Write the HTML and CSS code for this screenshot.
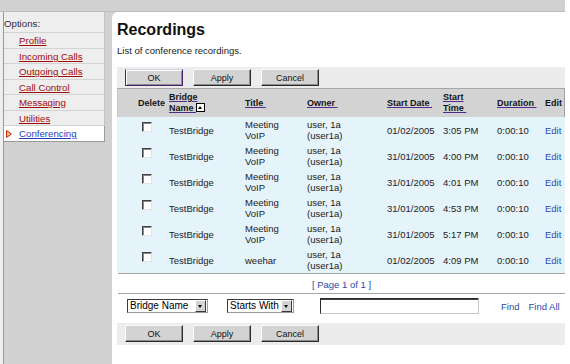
FILE: index.html
```html
<!DOCTYPE html>
<html lang="en">
<head>
  <meta charset="UTF-8">
  <title>Recordings</title>
  <link rel="stylesheet" href="styles.css">
</head>
<body>
  <div class="page">
    <div class="topbar"></div>
    <div class="frame">
      <div class="sidebar">
        <ul class="options">
          <li class="options-title">Options:</li>
          <li><a href="#">Profile</a></li>
          <li><a href="#">Incoming Calls</a></li>
          <li><a href="#">Outgoing Calls</a></li>
          <li><a href="#">Call Control</a></li>
          <li><a href="#">Messaging</a></li>
          <li><a href="#">Utilities</a></li>
          <li class="current">
            <svg class="arrow" width="6" height="8" viewBox="0 0 6 8"><path d="M0.5 0.5 L5.5 4 L0.5 7.5 Z" fill="#f6c27a" stroke="#c8280a" stroke-width="1"/></svg><a href="#">Conferencing</a>
          </li>
        </ul>
      </div>

      <div class="main">
        <h1>Recordings</h1>
        <p class="intro">List of conference recordings.</p>

        <div class="toolbar">
          <button class="btn btn-default">OK</button>
          <button class="btn">Apply</button>
          <button class="btn">Cancel</button>
        </div>

        <table class="list">
          <colgroup>
            <col style="width:49px"><col style="width:76px"><col style="width:62px"><col style="width:80px">
            <col style="width:56px"><col style="width:54px"><col style="width:48px"><col style="width:23px">
          </colgroup>
          <thead>
            <tr>
              <th class="col-del">Delete</th>
              <th><a href="#">Bridge</a><br><a href="#">Name&nbsp;</a><span class="sort"></span></th>
              <th><a href="#">Title&nbsp;</a></th>
              <th><a href="#">Owner&nbsp;</a></th>
              <th><a href="#">Start Date&nbsp;</a></th>
              <th><a href="#">Start</a><br><a href="#">Time&nbsp;</a></th>
              <th><a href="#">Duration&nbsp;</a></th>
              <th>Edit</th>
            </tr>
          </thead>
          <tbody>
            <tr>
              <td class="col-del"><span class="cb"></span></td>
              <td>TestBridge</td><td>Meeting<br>VoIP</td><td>user, 1a<br>(user1a)</td>
              <td>01/02/2005</td><td>3:05 PM</td><td>0:00:10</td><td><a class="edit" href="#">Edit</a></td>
            </tr>
            <tr>
              <td class="col-del"><span class="cb"></span></td>
              <td>TestBridge</td><td>Meeting<br>VoIP</td><td>user, 1a<br>(user1a)</td>
              <td>31/01/2005</td><td>4:00 PM</td><td>0:00:10</td><td><a class="edit" href="#">Edit</a></td>
            </tr>
            <tr>
              <td class="col-del"><span class="cb"></span></td>
              <td>TestBridge</td><td>Meeting<br>VoIP</td><td>user, 1a<br>(user1a)</td>
              <td>31/01/2005</td><td>4:01 PM</td><td>0:00:10</td><td><a class="edit" href="#">Edit</a></td>
            </tr>
            <tr>
              <td class="col-del"><span class="cb"></span></td>
              <td>TestBridge</td><td>Meeting<br>VoIP</td><td>user, 1a<br>(user1a)</td>
              <td>31/01/2005</td><td>4:53 PM</td><td>0:00:10</td><td><a class="edit" href="#">Edit</a></td>
            </tr>
            <tr>
              <td class="col-del"><span class="cb"></span></td>
              <td>TestBridge</td><td>Meeting<br>VoIP</td><td>user, 1a<br>(user1a)</td>
              <td>31/01/2005</td><td>5:17 PM</td><td>0:00:10</td><td><a class="edit" href="#">Edit</a></td>
            </tr>
            <tr>
              <td class="col-del"><span class="cb"></span></td>
              <td>TestBridge</td><td>weehar</td><td>user, 1a<br>(user1a)</td>
              <td>01/02/2005</td><td>4:09 PM</td><td>0:00:10</td><td><a class="edit" href="#">Edit</a></td>
            </tr>
          </tbody>
        </table>

        <div class="pager"><a href="#">[ Page 1 of 1 ]</a></div>

        <div class="filter">
          <div class="select sel-field"><span class="select-text">Bridge Name</span><span class="select-btn"></span></div>
          <div class="select sel-match"><span class="select-text">Starts With</span><span class="select-btn"></span></div>
          <input type="text" class="search">
          <a class="find" href="#">Find</a>
          <a class="find" href="#">Find All</a>
        </div>

        <div class="toolbar toolbar-bottom">
          <button class="btn">OK</button>
          <button class="btn">Apply</button>
          <button class="btn">Cancel</button>
        </div>
      </div>
    </div>
  </div>
</body>
</html>
```

FILE: styles.css
```css
body {
  margin: 0;
  background: #fff;
  font-family: "Liberation Sans", Arial, sans-serif;
  font-size: 9.5px;
  color: #222;
}

.page {
  width: 565px;
}

.topbar {
  height: 11px;
  background: #d1d1d1;
  border-bottom: 1px solid #bcbcbc;
}

.frame {
  display: flex;
  min-height: 352px;
  background: #d1d1d1;
}

/* left menu */
.sidebar {
  width: 108px;
  border-left: 3px solid #efefef;
  padding-left: 1px;
  box-shadow: inset 1px 0 0 #9a9a9a;
  background: #d1d1d1;
}

.options {
  list-style: none;
  margin: 0;
  padding: 0;
  width: 101px;
  background: #eeeeee;
  border-bottom: 1px solid #9a9a9a;
  font-size: 9.7px;
}

.options li {
  height: 14.5px;
  line-height: 16px;
  padding-left: 15px;
  border-bottom: 1px solid #d2d2d2;
  border-right: 1px solid #c2c2c2;
}

.options li.options-title {
  height: 20px;
  line-height: 24px;
  padding-left: 0;
  color: #2e2a38;
}

.options a {
  color: #9e0b0b;
}

.options li.current {
  background: #fff;
  padding-left: 2px;
  border-bottom: none;
  border-right-color: #9a9a9a;
}

.options li.current a {
  color: #1e3fc4;
}

.arrow {
  margin-right: 7px;
  vertical-align: -1px;
}

/* content */
.main {
  flex: 1;
  background: #fff;
  border-top-left-radius: 6px;
  padding-left: 5px;
}

h1 {
  margin: 9px 0 0;
  font-size: 16px;
  line-height: 18px;
  color: #111;
}

.intro {
  margin: 6px 0 0;
  line-height: 12px;
  color: #1a1a1a;
}

.toolbar {
  margin-top: 10px;
  height: 21px;
  padding: 2px 0 0 8px;
  box-sizing: border-box;
  background: #ececec;
  display: flex;
  gap: 10px;
}

.toolbar-bottom {
  margin-top: 5px;
  height: 22px;
}

.btn {
  width: 58px;
  height: 17px;
  padding: 0;
  font-family: "Liberation Sans", Arial, sans-serif;
  font-size: 9px;
  color: #111;
  background: #d3d3d3;
  border: 1px solid;
  border-color: #fbfbfb #2a2a2a #2a2a2a #fbfbfb;
  box-shadow: inset -1px -1px 0 #8c8c8c;
}

.btn-default {
  border-color: #d8d0e0 #4a2470 #4a2470 #4a2470;
  box-shadow: inset 1px 1px 0 #fff, inset -1px -1px 0 #8c8c8c;
}

/* recordings table */
.list {
  width: 448px;
  table-layout: fixed;
  border-collapse: separate;
  border-spacing: 0;
}

.list th {
  height: 28px;
  padding: 0 3px;
  background: #d3d3d3;
  border-top: 1px solid #a6a6a6;
  text-align: left;
  font-size: 9px;
  line-height: 11px;
  color: #141414;
  vertical-align: middle;
}

.list th:first-child {
  border-left: 1px solid #c4c4c4;
}

.list th:last-child {
  border-right: 1px solid #a0a0a0;
}

.list th a {
  color: #141414;
  text-decoration-color: #4f2a8a;
}

.list th.col-del {
  padding-left: 20px;
}

.sort {
  display: inline-block;
  position: relative;
  width: 7px;
  height: 7px;
  border: 1px solid #000;
  background: #fff;
  vertical-align: -1px;
}

.sort::after {
  content: "";
  position: absolute;
  left: 1px;
  top: 2px;
  border-left: 2.5px solid transparent;
  border-right: 2.5px solid transparent;
  border-bottom: 3px solid #000;
}

.list td {
  height: 26px;
  padding: 0 3px;
  background: #e5f3fb;
  line-height: 11px;
  vertical-align: middle;
  white-space: nowrap;
}

.list td.col-del {
  padding-left: 25px;
  vertical-align: top;
  padding-top: 5px;
  height: 21px;
}

.cb {
  display: block;
  width: 8px;
  height: 8px;
  background: #fff;
  border: 1px solid;
  border-color: #404040 #e4e4e4 #e4e4e4 #404040;
  box-shadow: inset 1px 1px 0 #8a8a8a;
}

.edit {
  color: #2b49b0;
  text-decoration: none;
}

.pager {
  height: 19px;
  line-height: 22px;
  text-align: center;
  border-top: 1px solid #a6a6a6;
  border-bottom: 1px solid #a6a6a6;
  margin-left: 1px;
}

.pager a {
  color: #2b49a6;
  text-decoration: none;
}

/* search row */
.filter {
  display: flex;
  align-items: center;
  height: 24px;
  padding-left: 10px;
}

.select {
  display: flex;
  align-items: center;
  height: 14px;
  box-sizing: border-box;
  border: 1px solid;
  border-color: #3a3a3a #9a9a9a #9a9a9a #3a3a3a;
  background: #fff;
}

.sel-field {
  width: 81px;
}

.sel-match {
  width: 67px;
  margin-left: 19px;
}

.select-text {
  flex: 1;
  padding-left: 2px;
  font-size: 10px;
  line-height: 12px;
  color: #000;
  white-space: nowrap;
  overflow: hidden;
}

.select-btn {
  position: relative;
  width: 9px;
  height: 10px;
  margin-right: 1px;
  background: #d3d3d3;
  border: 1px solid;
  border-color: #fff #3a3a3a #3a3a3a #fff;
}

.select-btn::after {
  content: "";
  position: absolute;
  left: 2px;
  top: 4px;
  border-left: 2.5px solid transparent;
  border-right: 2.5px solid transparent;
  border-top: 3px solid #000;
}

.search {
  width: 159px;
  height: 16px;
  box-sizing: border-box;
  margin: 0 0 0 26px;
  padding: 0;
  border: 1px solid;
  border-color: #2a2a2a #c8c8c8 #c8c8c8 #2a2a2a;
  box-shadow: inset 0 1px 0 #404040;
  background: #fff;
}

.find {
  margin-left: 22px;
  color: #2b49a6;
  text-decoration: none;
}

.find + .find {
  margin-left: 9px;
}
```
